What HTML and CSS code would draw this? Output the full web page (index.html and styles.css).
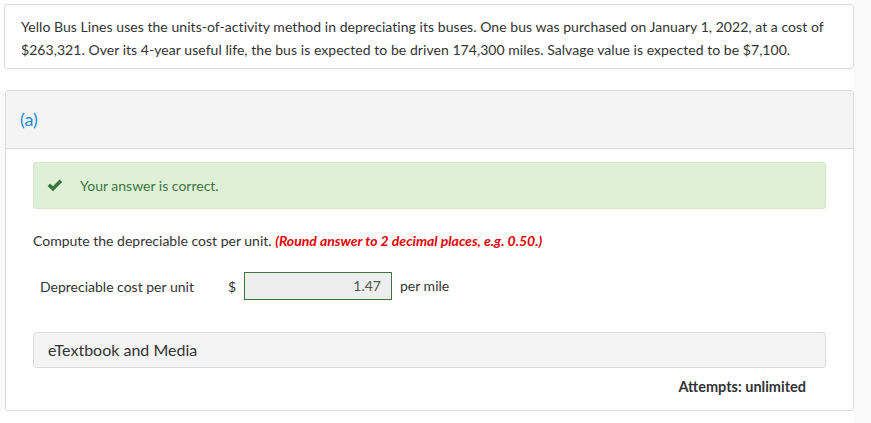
FILE: index.html
```html
<!DOCTYPE html>
<html>
<head>
<meta charset="utf-8">
<link rel="stylesheet" href="styles.css">
</head>
<body>
<div class="page">
  <div class="question">
    <p>Yello Bus Lines uses the units-of-activity method in depreciating its buses. One bus was purchased on January 1, 2022, at a cost of $263,321. Over its 4-year useful life, the bus is expected to be driven 174,300 miles. Salvage value is expected to be $7,100.</p>
  </div>
  <div class="part-wrap">
    <div class="part">
      <div class="part-head">(a)</div>
      <div class="part-body">
        <div class="alert">
          <svg class="check" width="16" height="13" viewBox="0 0 16 13"><path d="M0.6 7 L3.1 4.5 L6 7.3 L12.6 0.6 L15.2 3.1 L6 12.3 Z" fill="#3c763d"/></svg>
          <span>Your answer is correct.</span>
        </div>
        <p class="prompt">Compute the depreciable cost per unit. <em class="hint">(Round answer to 2 decimal places, e.g. 0.50.)</em></p>
        <div class="answer-row">
          <span class="label">Depreciable cost per unit</span>
          <span class="currency">$</span>
          <span class="input">1.47</span>
          <span class="unit">per mile</span>
        </div>
        <div class="media">eTextbook and Media</div>
        <div class="attempts">Attempts: unlimited</div>
      </div>
    </div>
  </div>
</div>
</body>
</html>
```

FILE: styles.css
```css
html, body {
  margin: 0;
  padding: 0;
}
body {
  background: #f9f9f9;
  font-family: Lato, "Open Sans", sans-serif;
  font-size: 14px;
  color: #333;
  height: 423px;
  overflow: hidden;
}
.page {
  width: 854px;
  background: #fff;
  height: 423px;
  padding-top: 4px;
  box-sizing: border-box;
}
.question {
  margin-left: 4px;
  width: 850px;
  box-sizing: border-box;
  border: 1px solid #dcdcdc;
  border-radius: 3px;
  padding: 10px 16px 7px 16px;
}
.question p {
  margin: 0;
  line-height: 23px;
  letter-spacing: 0.05px;
}
.part-wrap {
  margin-top: 21px;
  border-left: 5px solid #f9f9f9;
}
.part {
  border: 1px solid #dcdcdc;
  border-radius: 3px;
  width: 849px;
  box-sizing: border-box;
  height: 321px;
}
.part-head {
  background: #f4f4f4;
  height: 57px;
  border-bottom: 1px solid #dcdcdc;
  color: #1b8cd8;
  font-size: 18px;
  line-height: 57px;
  padding-left: 14px;
  border-radius: 3px 3px 0 0;
}
.part-body {
  padding: 13px 27px 0 27px;
}
.alert {
  background: #dff0d8;
  border: 1px solid #d3e8c8;
  border-radius: 3px;
  height: 47px;
  box-sizing: border-box;
  display: flex;
  align-items: center;
  padding-left: 13px;
  color: #3c763d;
}
.check {
  margin-right: 17px;
}
.prompt {
  margin: 22px 0 0 0;
  line-height: 20px;
}
.hint {
  color: #e50000;
  font-weight: bold;
  font-style: italic;
}
.answer-row {
  display: flex;
  align-items: center;
  margin-top: 21px;
  padding-left: 7px;
}
.label {
  width: 188px;
}
.currency {
  width: 16px;
}
.input {
  width: 148px;
  height: 28px;
  box-sizing: border-box;
  background: #eee;
  border: 1px solid #3c763d;
  text-align: right;
  padding-right: 10px;
  line-height: 26px;
  color: #555;
}
.unit {
  margin-left: 8px;
  margin-top: -2px;
}
.media {
  margin-top: 32px;
  background: #f4f4f4;
  border: 1px solid #dcdcdc;
  border-radius: 3px;
  height: 36px;
  box-sizing: border-box;
  line-height: 34px;
  padding-left: 14px;
  font-size: 16px;
}
.attempts {
  text-align: right;
  font-weight: bold;
  font-size: 14.5px;
  padding-right: 20px;
  margin-top: 10px;
  color: #333;
}
```
